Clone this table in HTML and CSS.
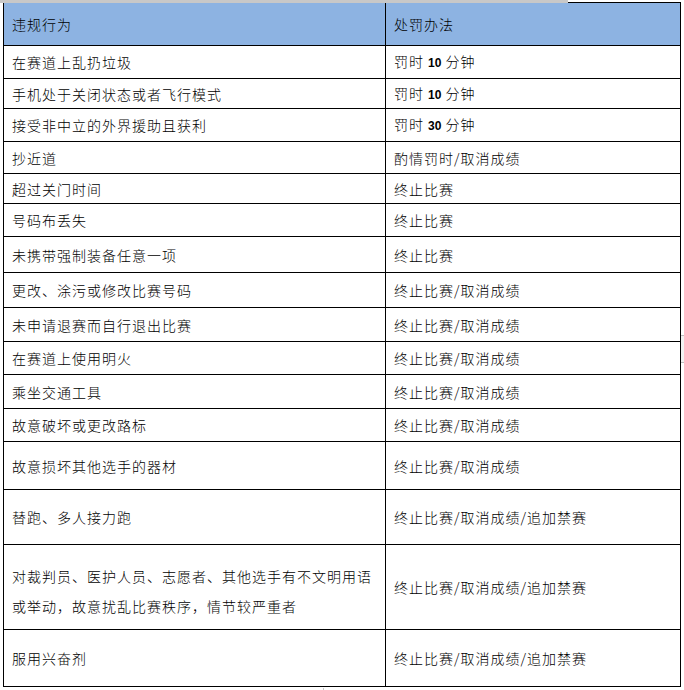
FILE: index.html
```html
<!DOCTYPE html>
<html lang="zh-CN">
<head>
    <meta charset="UTF-8">
    <meta name="viewport" content="width=device-width, initial-scale=1.0">
    <title>违规行为与处罚办法</title>
    <link rel="stylesheet" href="styles.css">
</head>
<body>
    <div class="sheet">
        <div class="ruler"></div>
        <table class="rules">
            <colgroup>
                <col class="col-act">
                <col class="col-penalty">
            </colgroup>
            <tr class="head h43">
                <td>违规行为</td>
                <td>处罚办法</td>
            </tr>
            <tr class="h33">
                <td>在赛道上乱扔垃圾</td>
                <td>罚时 <span class="num">10</span> 分钟</td>
            </tr>
            <tr class="h30">
                <td>手机处于关闭状态或者飞行模式</td>
                <td>罚时 <span class="num">10</span> 分钟</td>
            </tr>
            <tr class="h33">
                <td>接受非中立的外界援助且获利</td>
                <td>罚时 <span class="num">30</span> 分钟</td>
            </tr>
            <tr class="h32">
                <td>抄近道</td>
                <td>酌情罚时/取消成绩</td>
            </tr>
            <tr class="h30">
                <td>超过关门时间</td>
                <td>终止比赛</td>
            </tr>
            <tr class="h33">
                <td>号码布丢失</td>
                <td>终止比赛</td>
            </tr>
            <tr class="h36">
                <td>未携带强制装备任意一项</td>
                <td>终止比赛</td>
            </tr>
            <tr class="h35">
                <td>更改、涂污或修改比赛号码</td>
                <td>终止比赛/取消成绩</td>
            </tr>
            <tr class="h34">
                <td>未申请退赛而自行退出比赛</td>
                <td>终止比赛/取消成绩</td>
            </tr>
            <tr class="h33">
                <td>在赛道上使用明火</td>
                <td>终止比赛/取消成绩</td>
            </tr>
            <tr class="h34">
                <td>乘坐交通工具</td>
                <td>终止比赛/取消成绩</td>
            </tr>
            <tr class="h33">
                <td>故意破坏或更改路标</td>
                <td>终止比赛/取消成绩</td>
            </tr>
            <tr class="h48">
                <td>故意损坏其他选手的器材</td>
                <td>终止比赛/取消成绩</td>
            </tr>
            <tr class="h55">
                <td>替跑、多人接力跑</td>
                <td>终止比赛/取消成绩/追加禁赛</td>
            </tr>
            <tr class="h85">
                <td class="two-line">对裁判员、医护人员、志愿者、其他选手有不文明用语<br>或举动，故意扰乱比赛秩序，情节较严重者</td>
                <td>终止比赛/取消成绩/追加禁赛</td>
            </tr>
            <tr class="h57">
                <td>服用兴奋剂</td>
                <td>终止比赛/取消成绩/追加禁赛</td>
            </tr>
        </table>
        <div class="tick tick-right"></div>
        <div class="tick tick-bottom"></div>
    </div>
</body>
</html>
```

FILE: styles.css
```css
body {
    margin: 0;
    background: #fff;
    font-family: "Noto Sans CJK SC", "Noto Sans", sans-serif;
    color: #000;
}
.sheet {
    position: relative;
    padding: 2px 0 0 3px;
    height: 688px;
}
.ruler {
    position: absolute;
    top: 0;
    left: 0;
    width: 568px;
    height: 3px;
    background: #c8c8c8;
}
.rules {
    border-collapse: collapse;
    table-layout: fixed;
    width: 677px;
}
.col-act {
    width: 382px;
}
.col-penalty {
    width: 295px;
}
.rules td {
    border: 1px solid #000;
    padding: 0 8px;
    font-size: 14px;
    font-weight: 300;
    letter-spacing: 1px;
    line-height: 20px;
    vertical-align: middle;
    white-space: nowrap;
}
.rules .head td {
    background: #8db3e2;
}
.num {
    font-family: "Liberation Sans", Arial, sans-serif;
    font-size: 12px;
    font-weight: bold;
    letter-spacing: 0;
}
.rules .two-line {
    line-height: 30px;
    padding-top: 7px;
}
.h30 { height: 30px; }
.h32 { height: 32px; }
.h33 { height: 33px; }
.h34 { height: 34px; }
.h35 { height: 35px; }
.h36 { height: 36px; }
.h43 { height: 43px; }
.h48 { height: 48px; }
.h55 { height: 55px; }
.h57 { height: 57px; }
.h85 { height: 85px; }
.tick {
    position: absolute;
    background: #c8c8c8;
}
.tick-right {
    left: 681px;
    top: 335px;
    width: 3px;
    height: 26px;
    background: #f2f2f2;
    border-top: 1px solid #c0c0c0;
    border-bottom: 1px solid #c0c0c0;
}
.tick-bottom {
    left: 323px;
    top: 688px;
    width: 1px;
    height: 2px;
}
```
